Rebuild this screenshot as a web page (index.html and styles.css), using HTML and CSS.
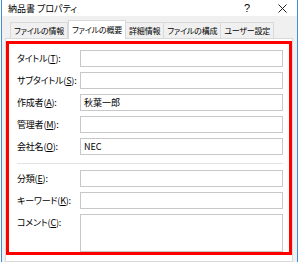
FILE: index.html
```html
<!DOCTYPE html>
<html>
  <head>
    <title>納品書 プロパティ</title>
    <link rel="stylesheet" href="styles.css">
  </head>
  <body>
    <div class="window">
      <div class="titlebar">
        <span class="title">納品書 プロパティ</span>
        <span class="help">?</span>
        <span class="close">
          <svg width="9" height="9" viewBox="0 0 9 9">
            <path d="M0.5 0.5 L8.5 8.5 M8.5 0.5 L0.5 8.5" stroke="#222" stroke-width="1" fill="none" />
          </svg>
        </span>
      </div>
      <div class="client">
        <div class="tabs">
          <div class="tab">ファイルの情報</div>
          <div class="tab active">ファイルの概要</div>
          <div class="tab">詳細情報</div>
          <div class="tab">ファイルの構成</div>
          <div class="tab">ユーザー設定</div>
        </div>
        <div class="panel">
          <div class="highlight">
            <div class="fields">
              <label>タイトル(<u>T</u>):</label>
              <div class="box"></div>

              <label>サブタイトル(<u>S</u>):</label>
              <div class="box"></div>

              <label>作成者(<u>A</u>):</label>
              <div class="box">秋葉一郎</div>

              <label>管理者(<u>M</u>):</label>
              <div class="box"></div>

              <label>会社名(<u>O</u>):</label>
              <div class="box">NEC</div>

              <div class="separator"></div>

              <label>分類(<u>E</u>):</label>
              <div class="box"></div>

              <label>キーワード(<u>K</u>):</label>
              <div class="box"></div>

              <label class="top">コメント(<u>C</u>):</label>
              <div class="box memo"></div>
            </div>
          </div>
        </div>
      </div>
    </div>
  </body>
</html>
```

FILE: styles.css
```css
body {
  margin: 0;
  width: 300px;
  height: 262px;
  overflow: hidden;
  background-color: #fff;
  font-family: "Noto Sans CJK JP", "Noto Sans", sans-serif;
  font-size: 9px;
  font-feature-settings: "palt";
  color: #000;
}

.window {
  margin-left: 1px;
  width: 295px;
  height: 262px;
  border-left: 1px solid #3f8fdc;
  border-right: 1px solid #3f8fdc;
  display: flex;
  flex-direction: column;
}

.titlebar {
  height: 22px;
  background-color: #fff;
  display: flex;
  align-items: center;
  padding-left: 6px;
  white-space: nowrap;
}

.title {
  flex: 1;
}

.help {
  width: 10px;
  text-align: center;
  margin-right: 26px;
  font-family: "Liberation Sans", sans-serif;
  font-size: 11px;
}

.close {
  display: flex;
  margin-right: 10px;
}

.client {
  flex: 1;
  background-color: #f0f0f0;
  padding: 6px 4px 0 3px;
}

.tabs {
  display: flex;
  align-items: flex-end;
  height: 16px;
  padding-left: 5px;
  white-space: nowrap;
  font-size: 8px;
  letter-spacing: -0.2px;
}

.tab {
  height: 16px;
  box-sizing: border-box;
  padding: 0 3px;
  border: 1px solid #d9d9d9;
  border-bottom: none;
  border-left: none;
  background-color: #f0f0f0;
  line-height: 15px;
  color: #000;
}

.tab:first-child {
  border-left: 1px solid #d9d9d9;
}

.tab.active {
  position: relative;
  height: 19px;
  margin-bottom: -1px;
  background-color: #fff;
  border-left: 1px solid #d9d9d9;
  line-height: 17px;
}

.panel {
  width: 286px;
  height: 220px;
  background-color: #fff;
  border: 1px solid #d9d9d9;
  padding-top: 2px;
}

.highlight {
  border: 3px solid #ff0000;
  height: 208px;
}

.fields {
  display: grid;
  grid-template-columns: 63px 203px;
  row-gap: 5px;
  padding: 6px 0 0 8px;
  align-items: center;
  white-space: nowrap;
}

.fields label {
  letter-spacing: -0.2px;
}

.fields u {
  text-decoration: underline;
}

.box {
  height: 17px;
  box-sizing: border-box;
  border: 1px solid #c8c8c8;
  padding-left: 3px;
  line-height: 15px;
}

.box.memo {
  height: 38px;
}

.fields label.top {
  align-self: start;
  line-height: 17px;
}

.separator {
  grid-column: 1 / 3;
  height: 1px;
  margin: 3px 0 1px;
  background-color: #e3e3e3;
}
```
